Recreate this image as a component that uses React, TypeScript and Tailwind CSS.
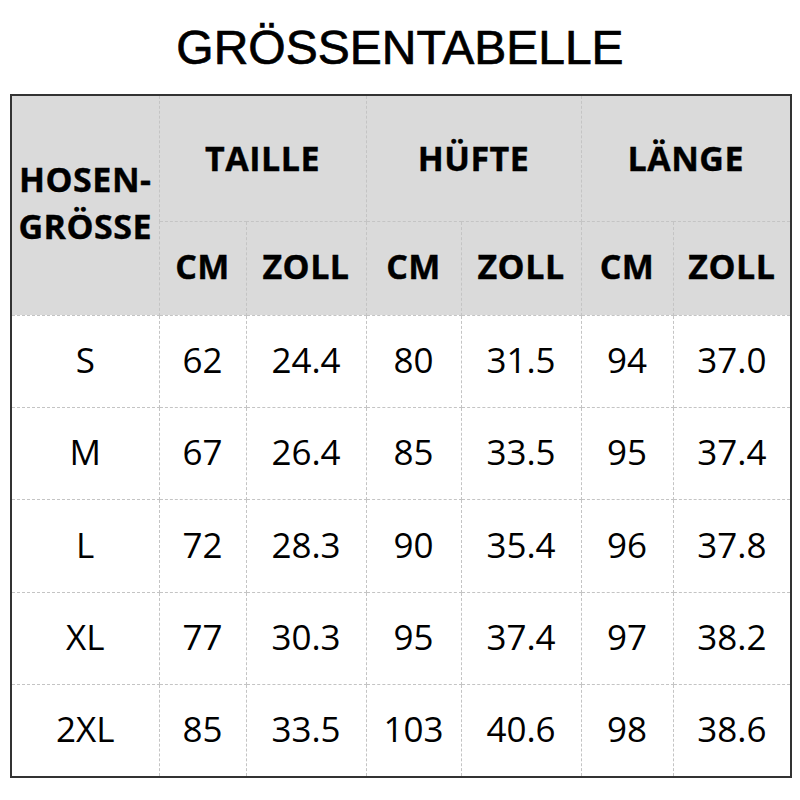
const rows = [
  ["S", "62", "24.4", "80", "31.5", "94", "37.0"],
  ["M", "67", "26.4", "85", "33.5", "95", "37.4"],
  ["L", "72", "28.3", "90", "35.4", "96", "37.8"],
  ["XL", "77", "30.3", "95", "37.4", "97", "38.2"],
  ["2XL", "85", "33.5", "103", "40.6", "98", "38.6"],
];

const colWidths = [148, 87, 120, 95, 120, 92, 118];

const cell = "border border-dashed border-[#c4c4c4] text-center align-middle p-0";

export default function App() {
  return (
    <main className="w-[800px] h-[800px] bg-white text-black">
      <h1 className="h-[94px] flex items-center justify-center pt-[2px] font-['Liberation_Sans',Arial,sans-serif] text-[48px] leading-none [-webkit-text-stroke:0.7px_black]">
        GRÖSSENTABELLE
      </h1>
      <div className="px-[10px]">
        <table className="w-[780px] table-fixed border-collapse border-2 border-solid border-[#333] font-['Open_Sans',sans-serif]">
          <colgroup>
            {colWidths.map((w, i) => (
              <col key={i} style={{ width: w }} />
            ))}
          </colgroup>
          <thead className="bg-[#dadada] font-bold text-[34px] tracking-[0.5px] [-webkit-text-stroke:0.4px_black]">
            <tr className="h-[126px]">
              <th rowSpan={2} className={`${cell} leading-[47px] pb-[4px]`}>
                HOSEN-
                <br />
                GRÖSSE
              </th>
              <th colSpan={2} className={cell}>TAILLE</th>
              <th colSpan={2} className={cell}>HÜFTE</th>
              <th colSpan={2} className={cell}>LÄNGE</th>
            </tr>
            <tr className="h-[94px]">
              {["CM", "ZOLL", "CM", "ZOLL", "CM", "ZOLL"].map((t, i) => (
                <th key={i} className={`${cell} pb-[4px]`}>
                  {t}
                </th>
              ))}
            </tr>
          </thead>
          <tbody className="text-[35px]">
            {rows.map((r, i) => (
              <tr key={i} className="h-[92.4px]">
                {r.map((v, j) => (
                  <td key={j} className={`${cell} pb-[2px]`}>
                    {v}
                  </td>
                ))}
              </tr>
            ))}
          </tbody>
        </table>
      </div>
    </main>
  );
}
